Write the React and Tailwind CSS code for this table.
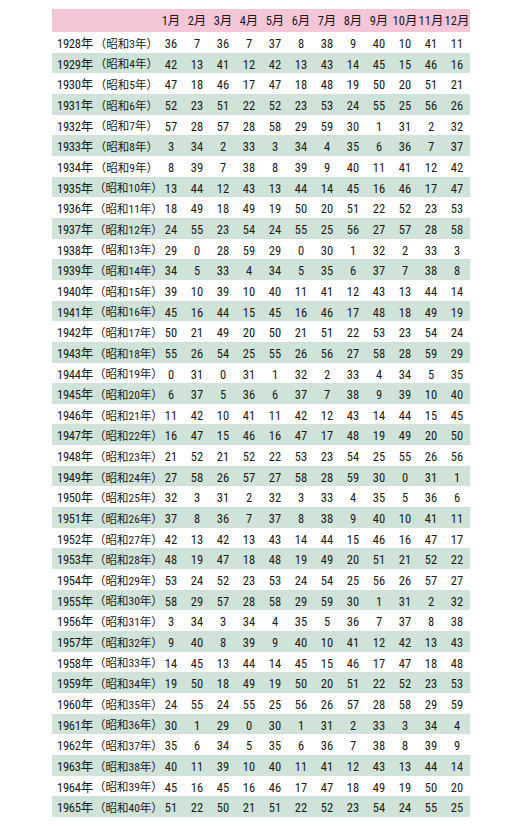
import React from "react";

const rows = [
  [1928, 3, "36 7 36 7 37 8 38 9 40 10 41 11"],
  [1929, 4, "42 13 41 12 42 13 43 14 45 15 46 16"],
  [1930, 5, "47 18 46 17 47 18 48 19 50 20 51 21"],
  [1931, 6, "52 23 51 22 52 23 53 24 55 25 56 26"],
  [1932, 7, "57 28 57 28 58 29 59 30 1 31 2 32"],
  [1933, 8, "3 34 2 33 3 34 4 35 6 36 7 37"],
  [1934, 9, "8 39 7 38 8 39 9 40 11 41 12 42"],
  [1935, 10, "13 44 12 43 13 44 14 45 16 46 17 47"],
  [1936, 11, "18 49 18 49 19 50 20 51 22 52 23 53"],
  [1937, 12, "24 55 23 54 24 55 25 56 27 57 28 58"],
  [1938, 13, "29 0 28 59 29 0 30 1 32 2 33 3"],
  [1939, 14, "34 5 33 4 34 5 35 6 37 7 38 8"],
  [1940, 15, "39 10 39 10 40 11 41 12 43 13 44 14"],
  [1941, 16, "45 16 44 15 45 16 46 17 48 18 49 19"],
  [1942, 17, "50 21 49 20 50 21 51 22 53 23 54 24"],
  [1943, 18, "55 26 54 25 55 26 56 27 58 28 59 29"],
  [1944, 19, "0 31 0 31 1 32 2 33 4 34 5 35"],
  [1945, 20, "6 37 5 36 6 37 7 38 9 39 10 40"],
  [1946, 21, "11 42 10 41 11 42 12 43 14 44 15 45"],
  [1947, 22, "16 47 15 46 16 47 17 48 19 49 20 50"],
  [1948, 23, "21 52 21 52 22 53 23 54 25 55 26 56"],
  [1949, 24, "27 58 26 57 27 58 28 59 30 0 31 1"],
  [1950, 25, "32 3 31 2 32 3 33 4 35 5 36 6"],
  [1951, 26, "37 8 36 7 37 8 38 9 40 10 41 11"],
  [1952, 27, "42 13 42 13 43 14 44 15 46 16 47 17"],
  [1953, 28, "48 19 47 18 48 19 49 20 51 21 52 22"],
  [1954, 29, "53 24 52 23 53 24 54 25 56 26 57 27"],
  [1955, 30, "58 29 57 28 58 29 59 30 1 31 2 32"],
  [1956, 31, "3 34 3 34 4 35 5 36 7 37 8 38"],
  [1957, 32, "9 40 8 39 9 40 10 41 12 42 13 43"],
  [1958, 33, "14 45 13 44 14 45 15 46 17 47 18 48"],
  [1959, 34, "19 50 18 49 19 50 20 51 22 52 23 53"],
  [1960, 35, "24 55 24 55 25 56 26 57 28 58 29 59"],
  [1961, 36, "30 1 29 0 30 1 31 2 33 3 34 4"],
  [1962, 37, "35 6 34 5 35 6 36 7 38 8 39 9"],
  [1963, 38, "40 11 39 10 40 11 41 12 43 13 44 14"],
  [1964, 39, "45 16 45 16 46 17 47 18 49 19 50 20"],
  [1965, 40, "51 22 50 21 51 22 52 23 54 24 55 25"],
];

const months = ["1月", "2月", "3月", "4月", "5月", "6月", "7月", "8月", "9月", "10月", "11月", "12月"];

export default function App() {
  return (
    <div className="w-[520px] h-[826px] bg-white pt-[9px] pl-[52px] text-[#1a1a1a] text-[12.5px] font-normal font-stretch-condensed font-['Roboto','Noto_Sans_CJK_JP',sans-serif]">
      <div className="w-[418px]">
        {/* header */}
        <div className="grid grid-cols-[42px_64px_repeat(12,26px)] h-[23px] pt-[2px] items-center bg-[#f5c6d8]">
          <div />
          <div />
          {months.map((m) => (
            <div key={m} className="text-center whitespace-nowrap">{m}</div>
          ))}
        </div>

        {rows.map(([year, showa, vals], i) => (
          <div
            key={year}
            className={`grid grid-cols-[42px_64px_repeat(12,26px)] h-[20.66px] pt-[3px] items-center ${
              i % 2 === 1 ? "bg-[#cfe3d8]" : "bg-white"
            }`}
          >
            <div className="pl-[5px] whitespace-nowrap tracking-[-0.02em]">{year}年</div>
            <div className="text-right whitespace-nowrap text-[11.5px]">（昭和{showa}年）</div>
            {vals.split(" ").map((v, j) => (
              <div key={j} className="text-center">{v}</div>
            ))}
          </div>
        ))}
      </div>
    </div>
  );
}
